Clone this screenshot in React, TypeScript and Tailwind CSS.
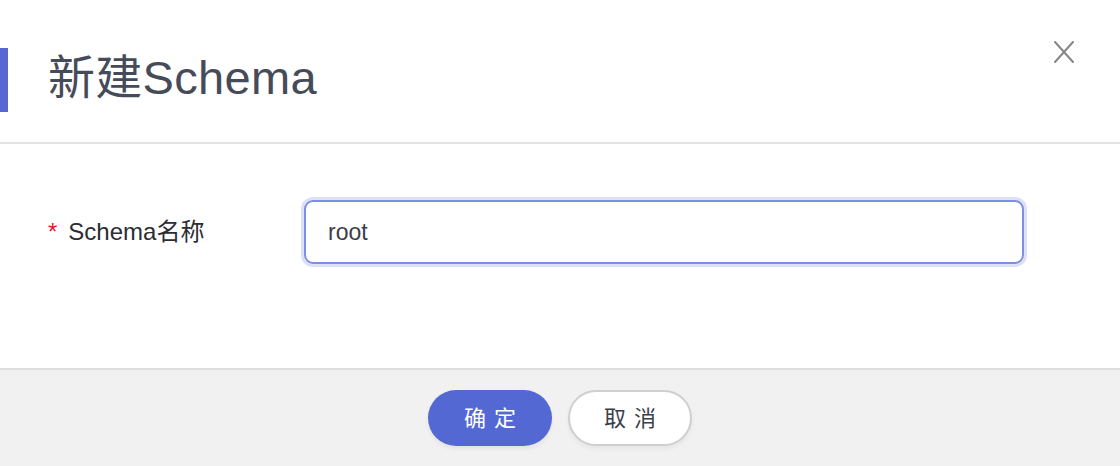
import React from 'react';

const font = { fontFamily: '"Liberation Sans", "Noto Sans CJK SC", sans-serif' };

const App = () => {
  return (
    <div className="w-[1120px] h-[466px] bg-white flex flex-col overflow-hidden" style={font}>
      <header className="h-[142px] flex items-start relative shrink-0">
        <div className="mt-[48px] w-[8px] h-[64px] bg-[#5567d3]" />
        <h1 className="ml-[40px] mt-[51px] text-[47px] leading-[54px] text-[#464b59] tracking-[0.3px]">新建Schema</h1>
        <button className="absolute right-[44px] top-[40px] w-[24px] h-[24px] flex items-center justify-center">
          <svg width="20" height="22" viewBox="0 0 20 22" fill="none" stroke="#858585" strokeWidth="2" strokeLinecap="round">
            <path d="M1 1 L19 21 M19 1 L1 21" />
          </svg>
        </button>
      </header>
      <div className="h-[2px] bg-[#e3e3e3] shrink-0" />

      <main className="flex-1 flex items-start pt-[56px]">
        <label className="ml-[48px] w-[256px] h-[64px] flex items-center text-[24px] text-[#2b2d33]">
          <span className="text-[#e8132b] mr-[11px]">*</span>
          Schema名称
        </label>
        <div className="w-[720px] h-[64px] rounded-[9px] border-2 border-[#7d8fe2] ring-[3px] ring-[#dde1f7] flex items-center px-[22px]">
          <span className="text-[23px] text-[#3b3e48]">root</span>
        </div>
      </main>

      <footer className="h-[98px] shrink-0 bg-[#f1f1f1] border-t-2 border-[#dddddd] flex items-start justify-center gap-[16px] pt-[20px]">
        <button className="w-[124px] h-[56px] rounded-full bg-[#5468d3] text-white text-[22px] tracking-[8px] pl-[8px] shadow-[0_3px_4px_rgba(0,0,0,0.06)]">
          确定
        </button>
        <button className="w-[124px] h-[56px] rounded-full bg-white border-2 border-[#cfcfcf] text-[#3b3e48] text-[22px] tracking-[8px] pl-[8px] shadow-[0_3px_4px_rgba(0,0,0,0.05)]">
          取消
        </button>
      </footer>
    </div>
  );
};

export default App;
